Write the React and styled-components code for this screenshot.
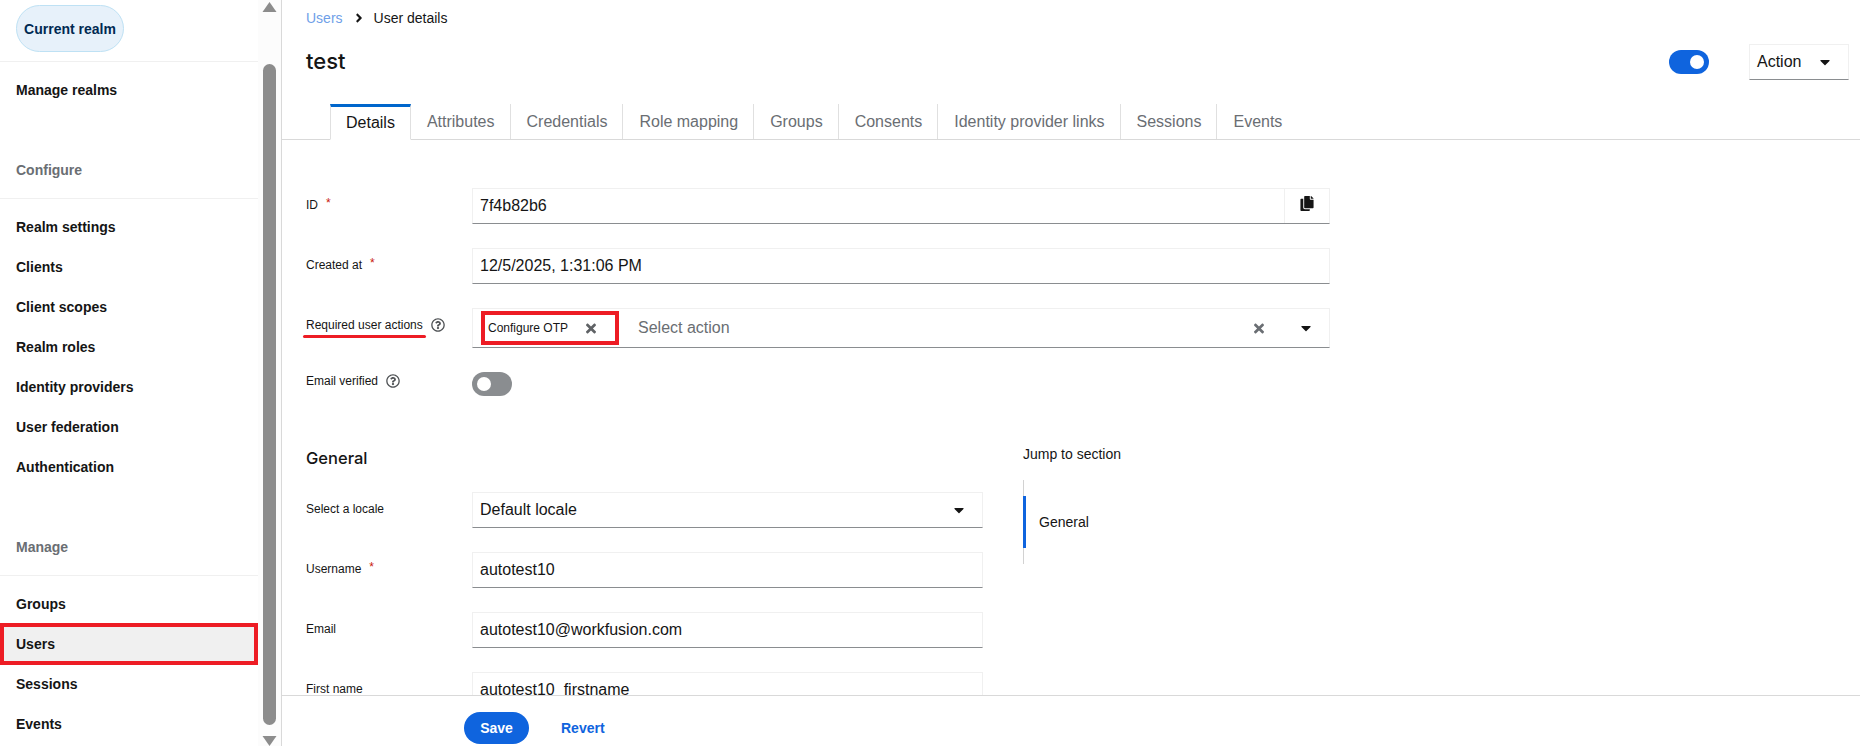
import styled, { createGlobalStyle } from "styled-components"
import {
  FaAngleRight,
  FaCaretDown,
  FaCopy,
  FaRegQuestionCircle,
  FaTimes,
} from "react-icons/fa"

const GlobalStyle = createGlobalStyle`
  html, body {
    margin: 0;
    padding: 0;
    height: 100%;
    overflow: hidden;
    background: #fff;
    font-family: "Liberation Sans", Arial, sans-serif;
    color: #151515;
  }
  * { box-sizing: border-box; }
`

const Page = styled.div`
  display: flex;
  width: 1860px;
  height: 746px;
  overflow: hidden;
`

const Sidebar = styled.aside`
  display: flex;
  flex: 0 0 282px;
  border-right: 1px solid #d9d9d9;
`

const Nav = styled.nav`
  flex: 1;
  display: flex;
  flex-direction: column;
  padding-top: 5px;
`

const RealmWrap = styled.div`
  padding: 0 0 9px 16px;
  border-bottom: 1px solid #f0f0f0;
`

const RealmPill = styled.div`
  display: flex;
  align-items: center;
  justify-content: center;
  width: 108px;
  height: 47px;
  border: 1px solid #bee1f4;
  border-radius: 24px;
  background: #e7f1fa;
  color: #002952;
  font-size: 14px;
  font-weight: 700;
`

const NavItem = styled.div`
  display: flex;
  align-items: center;
  height: 40px;
  padding-left: ${({ $active }) => ($active ? "12px" : "16px")};
  font-size: 14px;
  font-weight: 700;
  color: #151515;
  ${({ $active }) =>
    $active &&
    `
    height: 42px;
    margin: -1px 0;
    background: #f0f0f0;
    border: 4px solid #ed1c24;
    `}
`

const NavTitle = styled.div`
  margin-top: 50px;
  padding: 0 0 18px 16px;
  line-height: 20px;
  border-bottom: 1px solid #f0f0f0;
  font-size: 14px;
  font-weight: 700;
  color: #6a6e73;
`

const NavList = styled.div`
  display: flex;
  flex-direction: column;
  padding-top: 8px;
`

const Scrollbar = styled.div`
  flex: 0 0 23px;
  display: flex;
  flex-direction: column;
  align-items: center;
  padding-top: 2px;
  background: #fcfcfc;
`

const ScrollThumb = styled.div`
  width: 13px;
  height: 661px;
  margin: 52px 0 auto;
  border-radius: 7px;
  background: #8c8c8c;
`

const Arrow = styled.svg`
  display: block;
  flex: none;
  width: 15px;
  height: 10px;
  fill: #8c8c8c;
`

const Main = styled.main`
  flex: 1;
  min-width: 0;
  display: flex;
  flex-direction: column;
`

const Header = styled.header`
  padding: 10px 11px 0 24px;
`

const Breadcrumb = styled.div`
  display: flex;
  align-items: center;
  height: 16px;
  font-size: 14px;
  color: #151515;

  svg {
    width: 12px;
    height: 14px;
    margin: 0 9px 0 10px;
  }
`

const Crumb = styled.span`
  color: ${({ $link }) => ($link ? "#6f9fe8" : "#151515")};
`

const TitleRow = styled.div`
  display: flex;
  align-items: center;
  justify-content: space-between;
  height: 36px;
  margin-top: 18px;
`

const Title = styled.h1`
  margin: -2px 0 0;
  font-family: Inter, "Liberation Sans", sans-serif;
  font-size: 22px;
  font-weight: 500;
  color: #151515;
`

const TitleActions = styled.div`
  display: flex;
  align-items: center;
  gap: 40px;
`

const Toggle = styled.span`
  position: relative;
  display: block;
  width: 40px;
  height: 24px;
  border-radius: 12px;
  background: ${({ $on }) => ($on ? "#0f64de" : "#8a8d90")};

  &::after {
    content: "";
    position: absolute;
    top: 5px;
    left: ${({ $on }) => ($on ? "21px" : "5px")};
    width: 14px;
    height: 14px;
    border-radius: 50%;
    background: #fff;
  }
`

const ActionSelect = styled.div`
  display: flex;
  align-items: center;
  justify-content: space-between;
  width: 100px;
  height: 36px;
  padding: 0 17px 0 7px;
  border: 1px solid #f0f0f0;
  border-bottom-color: #8a8d90;
  font-size: 16px;

  svg {
    width: 12px;
    height: 16px;
  }
`

const Tabs = styled.div`
  display: flex;
  height: 36px;
  margin-top: 24px;
  padding-left: 48px;
  border-bottom: 1px solid #d9d9d9;
`

const Tab = styled.div`
  position: relative;
  display: flex;
  align-items: center;
  padding: 0 15px 0 16px;
  font-size: 16px;
  color: ${({ $active }) => ($active ? "#151515" : "#6a6e73")};
  border-right: 1px solid #e0e0e0;
  ${({ $active }) =>
    $active &&
    `
    margin-bottom: -1px;
    background: #fff;
    border-left: 1px solid #e0e0e0;
    border-top: 3px solid #0066cc;
    border-bottom: 1px solid #fff;
    padding: 0 15px;
    `}

  &:last-child {
    border-right: 0;
  }
`

const Content = styled.div`
  flex: 1;
  min-height: 0;
  overflow: hidden;
  padding: 48px 0 0 24px;
`

const Form = styled.div`
  display: grid;
  grid-template-columns: 166px ${({ $width }) => $width}px;
  row-gap: 24px;
  align-items: center;
`

const Label = styled.div`
  display: flex;
  align-items: center;
  font-size: 12px;
  color: #151515;
  margin-top: ${({ $help }) => ($help ? "-6px" : "-3px")};

  svg {
    width: 14px;
    height: 14px;
    margin-left: 8px;
    color: #4f5255;
  }
`

const Required = styled.span`
  margin: -3px 0 0 8px;
  color: #c9190b;
`

const Underlined = styled.span`
  position: relative;

  &::after {
    content: "";
    position: absolute;
    left: -3px;
    right: -3px;
    bottom: -6px;
    height: 3px;
    border-radius: 2px;
    background: #ed1c24;
  }
`

const InputBox = styled.div`
  display: flex;
  align-items: center;
  height: ${({ $tall }) => ($tall ? "40px" : "36px")};
  padding-left: 7px;
  border: 1px solid #f0f0f0;
  border-bottom-color: #8a8d90;
  font-size: 16px;
  color: #151515;
`

const InputValue = styled.span`
  flex: 1;
  white-space: pre;
`

const CopyButton = styled.div`
  display: flex;
  align-items: center;
  justify-content: center;
  width: 45px;
  height: 100%;
  border-left: 1px solid #f0f0f0;

  svg {
    width: 14px;
    height: 15px;
    margin-top: -5px;
  }
`

const Chip = styled.div`
  display: flex;
  align-items: center;
  width: 138px;
  height: 34px;
  margin: 0 0 0 1px;
  padding-left: 3px;
  border: 4px solid #ed1c24;
  font-size: 12px;
  color: #151515;

  svg {
    width: 10px;
    height: 15px;
    margin-left: 18px;
    color: #5f6265;
  }
`

const Placeholder = styled.span`
  flex: 1;
  margin-left: 19px;
  color: #6a6e73;
`

const IconSlot = styled.span`
  display: flex;
  align-items: center;
  justify-content: center;
  width: ${({ $w }) => $w}px;
  color: ${({ $muted }) => ($muted ? "#6a6e73" : "#151515")};

  svg {
    width: ${({ $muted }) => ($muted ? "10px" : "12px")};
    height: ${({ $muted }) => ($muted ? "15px" : "16px")};
  }
`

const Columns = styled.div`
  display: flex;
  gap: 40px;
  margin-top: 50px;
`

const SectionHead = styled.h2`
  margin: 0 0 22px;
  height: 24px;
  line-height: 24px;
  font-family: Inter, "Liberation Sans", sans-serif;
  font-size: 16.5px;
  font-weight: 500;
  color: #151515;
`

const JumpLinks = styled.div`
  font-size: 14px;
  color: #151515;
`

const JumpTitle = styled.div`
  height: 16px;
  line-height: 16px;
`

const JumpList = styled.div`
  margin-top: 18px;
  padding: 16px 0;
  border-left: 1px solid #d2d2d2;
`

const JumpItem = styled.div`
  display: flex;
  align-items: center;
  height: 52px;
  margin-left: -1px;
  padding-left: 13px;
  border-left: 3px solid #0f64de;
`

const Footer = styled.footer`
  flex: 0 0 51px;
  display: flex;
  align-items: flex-start;
  gap: 16px;
  padding: 16px 0 0 182px;
  border-top: 1px solid #d9d9d9;
  background: #fff;
`

const SaveButton = styled.button`
  width: 65px;
  height: 32px;
  border: 0;
  border-radius: 16px;
  background: #0f64de;
  color: #fff;
  font: 700 14px "Liberation Sans", Arial, sans-serif;
`

const RevertButton = styled.button`
  padding: 0 16px;
  height: 32px;
  border: 0;
  background: none;
  color: #0f64de;
  font: 700 14px "Liberation Sans", Arial, sans-serif;
`

const configureLinks = [
  "Realm settings",
  "Clients",
  "Client scopes",
  "Realm roles",
  "Identity providers",
  "User federation",
  "Authentication",
]
const manageLinks = ["Groups", "Users", "Sessions", "Events"]
const tabs = [
  "Details",
  "Attributes",
  "Credentials",
  "Role mapping",
  "Groups",
  "Consents",
  "Identity provider links",
  "Sessions",
  "Events",
]

const App = () => {
  return (
    <Page>
      <GlobalStyle />
      <Sidebar>
        <Nav>
          <RealmWrap>
            <RealmPill>Current realm</RealmPill>
          </RealmWrap>
          <NavList>
            <NavItem>Manage realms</NavItem>
          </NavList>
          <NavTitle>Configure</NavTitle>
          <NavList>
            {configureLinks.map((link) => (
              <NavItem key={link}>{link}</NavItem>
            ))}
          </NavList>
          <NavTitle>Manage</NavTitle>
          <NavList>
            {manageLinks.map((link) => (
              <NavItem key={link} $active={link === "Users"}>
                {link}
              </NavItem>
            ))}
          </NavList>
        </Nav>
        <Scrollbar>
          <Arrow viewBox="0 0 15 10">
            <path d="M7.5 0 L14.5 10 L0.5 10 Z" />
          </Arrow>
          <ScrollThumb />
          <Arrow viewBox="0 0 15 10">
            <path d="M7.5 10 L14.5 0 L0.5 0 Z" />
          </Arrow>
        </Scrollbar>
      </Sidebar>
      <Main>
        <Header>
          <Breadcrumb>
            <Crumb $link>Users</Crumb>
            <FaAngleRight />
            <Crumb>User details</Crumb>
          </Breadcrumb>
          <TitleRow>
            <Title>test</Title>
            <TitleActions>
              <Toggle $on />
              <ActionSelect>
                Action
                <FaCaretDown />
              </ActionSelect>
            </TitleActions>
          </TitleRow>
        </Header>
        <Tabs>
          {tabs.map((tab) => (
            <Tab key={tab} $active={tab === "Details"}>
              {tab}
            </Tab>
          ))}
        </Tabs>
        <Content>
          <Form $width={858}>
            <Label>
              ID<Required>*</Required>
            </Label>
            <InputBox>
              <InputValue>7f4b82b6</InputValue>
              <CopyButton>
                <FaCopy />
              </CopyButton>
            </InputBox>
            <Label>
              Created at<Required>*</Required>
            </Label>
            <InputBox>
              <InputValue>12/5/2025, 1:31:06 PM</InputValue>
            </InputBox>
            <Label $help>
              <Underlined>Required user actions</Underlined>
              <FaRegQuestionCircle />
            </Label>
            <InputBox $tall>
              <Chip>
                Configure OTP
                <FaTimes />
              </Chip>
              <Placeholder>Select action</Placeholder>
              <IconSlot $w={48} $muted>
                <FaTimes />
              </IconSlot>
              <IconSlot $w={46}>
                <FaCaretDown />
              </IconSlot>
            </InputBox>
            <Label $help>
              Email verified
              <FaRegQuestionCircle />
            </Label>
            <Toggle />
          </Form>
          <Columns>
            <div>
              <SectionHead>General</SectionHead>
              <Form $width={511}>
                <Label>Select a locale</Label>
                <InputBox>
                  <InputValue>Default locale</InputValue>
                  <IconSlot $w={46}>
                    <FaCaretDown />
                  </IconSlot>
                </InputBox>
                <Label>
                  Username<Required>*</Required>
                </Label>
                <InputBox>
                  <InputValue>autotest10</InputValue>
                </InputBox>
                <Label>Email</Label>
                <InputBox>
                  <InputValue>autotest10@workfusion.com</InputValue>
                </InputBox>
                <Label>First name</Label>
                <InputBox>
                  <InputValue>autotest10_firstname</InputValue>
                </InputBox>
              </Form>
            </div>
            <JumpLinks>
              <JumpTitle>Jump to section</JumpTitle>
              <JumpList>
                <JumpItem>General</JumpItem>
              </JumpList>
            </JumpLinks>
          </Columns>
        </Content>
        <Footer>
          <SaveButton>Save</SaveButton>
          <RevertButton>Revert</RevertButton>
        </Footer>
      </Main>
    </Page>
  )
}

export default App
